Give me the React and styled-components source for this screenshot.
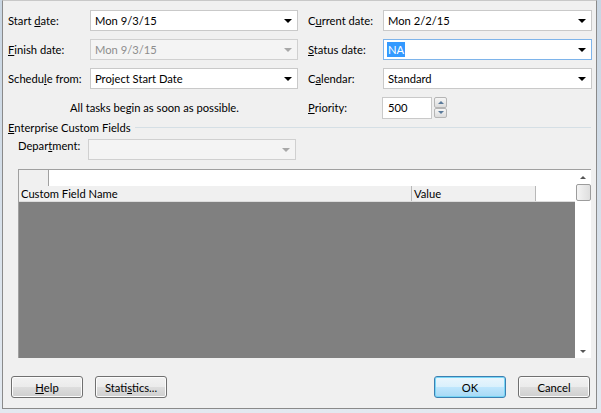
import React from 'react'
import styled, { createGlobalStyle } from 'styled-components'

const Global = createGlobalStyle`
  html, body { margin: 0; padding: 0; }
  body {
    width: 601px;
    height: 413px;
    overflow: hidden;
    background: linear-gradient(to bottom, #c9d6e3, #e3e9f0);
    font-family: Lato, "Noto Sans", sans-serif;
    font-size: 11.2px;
    color: #000;
  }
`

const Dialog = styled.div`
  box-sizing: border-box;
  margin: 0 4px 0 2px;
  height: 409px;
  border: 1px solid #8a8a8a;
  border-top-color: #c8c8c8;
  background: #f0f0f0;
  padding: 9px 5px 0 5px;
  display: flex;
  flex-direction: column;
`

const Form = styled.div`
  display: grid;
  grid-template-columns: 300px 284px;
  row-gap: 8px;
`

const Field = styled.div`
  display: flex;
  align-items: center;
  height: 21px;
`

const Label = styled.span`
  width: ${p => p.$w}px;
  flex: none;
  white-space: nowrap;
  u { text-decoration: underline; }
`

const Combo = styled.div`
  box-sizing: border-box;
  width: ${p => p.$w}px;
  height: 21px;
  border: 1px solid ${p => (p.$focus ? '#7eb4ea' : p.$disabled ? '#d0d0d0' : '#c9c9c9')};
  background: ${p => (p.$disabled ? '#f4f4f4' : '#fff')};
  color: ${p => (p.$disabled ? '#8d8d8d' : '#000')};
  display: flex;
  align-items: center;
  padding-left: 4px;
  position: relative;
`

const Arrow = styled.span`
  position: absolute;
  right: 5px;
  top: 8px;
  width: 0;
  height: 0;
  border-left: 4px solid transparent;
  border-right: 4px solid transparent;
  border-top: 4px solid ${p => (p.$disabled ? '#a8a8a8' : '#000')};
`

const Selected = styled.span`
  background: #3399ff;
  color: #fff;
  padding: 0 1px;
  margin-left: -1px;
  line-height: 15px;
`

const Note = styled.div`
  padding-left: 62px;
`

const Spinner = styled.div`
  display: flex;
  align-items: center;
  gap: 2px;
`

const SpinBox = styled.div`
  box-sizing: border-box;
  width: 50px;
  height: 22px;
  border: 1px solid #c9c9c9;
  background: #fff;
  display: flex;
  align-items: center;
  padding-left: 5px;
`

const SpinButtons = styled.div`
  display: flex;
  flex-direction: column;
  width: 13px;
  height: 21px;
`

const SpinBtn = styled.div`
  flex: 1;
  box-sizing: border-box;
  border: 1px solid #b5b5b5;
  background: linear-gradient(#f6f6f6, #dcdcdc);
  border-radius: 2px;
  display: flex;
  align-items: center;
  justify-content: center;
  &::after {
    content: '';
    border-left: 3px solid transparent;
    border-right: 3px solid transparent;
    ${p => (p.$up ? 'border-bottom: 3px solid #5a7a9a;' : 'border-top: 3px solid #5a7a9a;')}
  }
`

const GroupTitle = styled.div`
  display: flex;
  align-items: center;
  gap: 4px;
  margin-top: 2px;
  height: 14px;
  u { text-decoration: underline; }
  &::after {
    content: '';
    flex: 1;
    border-top: 1px solid #d5dfe5;
  }
`

const DeptRow = styled(Field)`
  margin-top: 5px;
  padding-left: 10px;
  align-items: flex-start;
`

const Grid = styled.div`
  box-sizing: border-box;
  margin: 9px 0 0 10px;
  width: 573px;
  height: 189px;
  border-top: 1px solid #a0a0a0;
  border-left: 1px solid #a0a0a0;
  display: flex;
  background: #fff;
`

const GridBody = styled.div`
  flex: 1;
  display: flex;
  flex-direction: column;
`

const TopRow = styled.div`
  height: 16px;
  display: flex;
`

const Corner = styled.div`
  width: 29px;
  background: #f0f0f0;
  border-right: 1px solid #a0a0a0;
`

const HeaderRow = styled.div`
  height: 15px;
  display: flex;
  border-bottom: 1px solid #dcdcdc;
`

const HeaderCell = styled.div`
  width: ${p => p.$w}px;
  box-sizing: border-box;
  background: #f0f0f0;
  border-right: 1px solid #b8b8b8;
  padding-left: 2px;
  line-height: 15px;
  white-space: nowrap;
`

const Empty = styled.div`
  flex: 1;
  background: #808080;
`

const Scrollbar = styled.div`
  width: 16px;
  background: #fff;
  display: flex;
  flex-direction: column;
  align-items: center;
`

const ScrollArrow = styled.div`
  height: 14px;
  display: flex;
  align-items: center;
  justify-content: center;
  margin-top: ${p => (p.$down ? 'auto' : '0')};
  &::after {
    content: '';
    border-left: 3px solid transparent;
    border-right: 3px solid transparent;
    ${p => (p.$down ? 'border-top: 3px solid #555;' : 'border-bottom: 3px solid #555;')}
  }
`

const Thumb = styled.div`
  box-sizing: border-box;
  width: 15px;
  height: 17px;
  border: 1px solid #9c9c9c;
  border-radius: 2px;
  background: linear-gradient(to right, #f4f4f4, #dedede);
`

const Buttons = styled.div`
  display: flex;
  margin-top: 18px;
  padding: 0 1px 0 3px;
  gap: 12px;
`

const Spacer = styled.div`
  flex: 1;
`

const Button = styled.div`
  box-sizing: border-box;
  width: 72px;
  height: 22px;
  border: 1px solid ${p => (p.$default ? '#3c7fb1' : '#707070')};
  border-radius: 3px;
  background: ${p =>
    p.$default
      ? 'linear-gradient(#eaf6fd 0%, #d9f0fc 50%, #bee6fd 51%, #a7d9f5 100%)'
      : 'linear-gradient(#f2f2f2 0%, #ebebeb 50%, #dddddd 51%, #cfcfcf 100%)'};
  box-shadow: inset 0 0 0 1px ${p => (p.$default ? '#78d6f6' : '#fcfcfc')};
  display: flex;
  align-items: center;
  justify-content: center;
  u { text-decoration: underline; }
`

const App = () => {
  return (
    <>
      <Global />
      <Dialog>
        <Form>
          <Field>
            <Label $w={82}>Start <u>d</u>ate:</Label>
            <Combo $w={208}>Mon 9/3/15<Arrow /></Combo>
          </Field>
          <Field>
            <Label $w={75}>C<u>u</u>rrent date:</Label>
            <Combo $w={209}>Mon 2/2/15<Arrow /></Combo>
          </Field>
          <Field>
            <Label $w={82}><u>F</u>inish date:</Label>
            <Combo $w={208} $disabled>Mon 9/3/15<Arrow $disabled /></Combo>
          </Field>
          <Field>
            <Label $w={75}><u>S</u>tatus date:</Label>
            <Combo $w={209} $focus><Selected>NA</Selected><Arrow /></Combo>
          </Field>
          <Field>
            <Label $w={82}>Schedu<u>l</u>e from:</Label>
            <Combo $w={208}>Project Start Date<Arrow /></Combo>
          </Field>
          <Field>
            <Label $w={75}>C<u>a</u>lendar:</Label>
            <Combo $w={209}>Standard<Arrow /></Combo>
          </Field>
          <Field>
            <Note>All tasks begin as soon as possible.</Note>
          </Field>
          <Field>
            <Label $w={74}><u>P</u>riority:</Label>
            <Spinner>
              <SpinBox>500</SpinBox>
              <SpinButtons>
                <SpinBtn $up />
                <SpinBtn />
              </SpinButtons>
            </Spinner>
          </Field>
        </Form>
        <GroupTitle><span><u>E</u>nterprise Custom Fields</span></GroupTitle>
        <DeptRow>
          <Label $w={70}>Depar<u>t</u>ment:</Label>
          <Combo $w={208} $disabled><Arrow $disabled /></Combo>
        </DeptRow>
        <Grid>
          <GridBody>
            <TopRow><Corner /></TopRow>
            <HeaderRow>
              <HeaderCell $w={393}>Custom Field Name</HeaderCell>
              <HeaderCell $w={124}>Value</HeaderCell>
            </HeaderRow>
            <Empty />
          </GridBody>
          <Scrollbar>
            <ScrollArrow />
            <Thumb />
            <ScrollArrow $down />
          </Scrollbar>
        </Grid>
        <Buttons>
          <Button><u>H</u>elp</Button>
          <Button>Stati<u>s</u>tics...</Button>
          <Spacer />
          <Button $default>OK</Button>
          <Button>Cancel</Button>
        </Buttons>
      </Dialog>
    </>
  )
}

export default App
